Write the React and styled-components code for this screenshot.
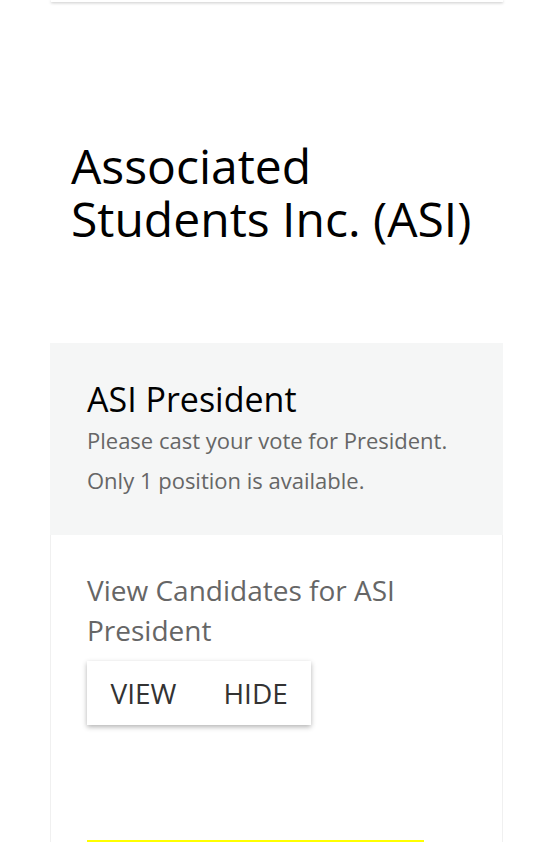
import React from 'react';
import styled, { createGlobalStyle } from 'styled-components';

const GlobalStyle = createGlobalStyle`
  html, body {
    margin: 0;
    padding: 0;
    background: #fff;
  }
  body {
    font-family: "Open Sans", "Noto Sans", Arial, sans-serif;
    color: #000;
  }
  * {
    box-sizing: border-box;
  }
`;

const Page = styled.div`
  width: 453px;
  margin: 0 0 0 50px;
`;

const TopBar = styled.div`
  height: 2px;
  margin-left: 1px;
  background: #fff;
  box-shadow: 0 1px 3px rgba(0, 0, 0, 0.25);
`;

const Title = styled.h1`
  margin: 137px 0 0;
  padding: 0 21px;
  font-size: 48px;
  font-weight: 400;
  line-height: 53px;
`;

const Card = styled.section`
  margin-top: 98px;
`;

const CardHeader = styled.div`
  background: #f5f6f6;
  padding: 36px 37px 35px;
`;

const PositionName = styled.h2`
  margin: 0;
  font-size: 34px;
  font-weight: 400;
  line-height: 41px;
`;

const Note = styled.p`
  margin: 0;
  font-size: 22px;
  line-height: 40px;
  color: #666;
`;

const CardBody = styled.div`
  padding: 35px 36px 0;
  border-left: 1px solid #f0f0f0;
  border-right: 1px solid #f0f0f0;
  height: 307px;
`;

const CandidatesLabel = styled.p`
  margin: 0;
  font-size: 28px;
  line-height: 40px;
  color: #666;
`;

const ButtonGroup = styled.div`
  display: inline-flex;
  margin-top: 11px;
  background: #fff;
  box-shadow: 0 2px 5px rgba(0, 0, 0, 0.3);
`;

const ToggleButton = styled.button`
  border: none;
  background: transparent;
  padding: 12px 23.5px;
  font-family: inherit;
  font-size: 28px;
  line-height: 40px;
  color: #333;
  text-transform: uppercase;
  cursor: pointer;
`;

const VoteLine = styled.div`
  width: 337px;
  margin-top: 115px;
  border-top: 3px solid #ffff00;
`;

export default function App() {
  return (
    <>
      <GlobalStyle />
      <Page>
        <TopBar />
        <Title>Associated Students Inc. (ASI)</Title>
        <Card>
          <CardHeader>
            <PositionName>ASI President</PositionName>
            <Note>Please cast your vote for President.</Note>
            <Note>Only 1 position is available.</Note>
          </CardHeader>
          <CardBody>
            <CandidatesLabel>View Candidates for ASI President</CandidatesLabel>
            <ButtonGroup>
              <ToggleButton>View</ToggleButton>
              <ToggleButton>Hide</ToggleButton>
            </ButtonGroup>
            <VoteLine />
          </CardBody>
        </Card>
      </Page>
    </>
  );
}
